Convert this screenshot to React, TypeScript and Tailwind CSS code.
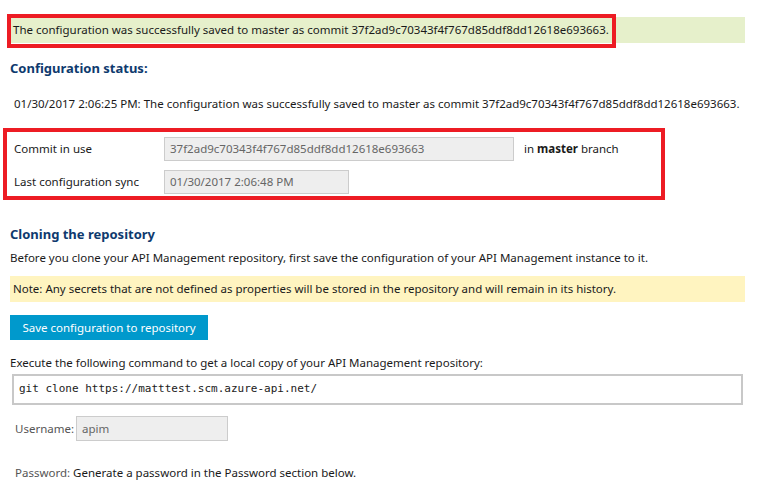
import React from 'react';

const font = { fontFamily: '"Noto Sans", "Open Sans", Arial, sans-serif' };

export default function App() {
  return (
    <div className="relative w-[772px] h-[498px] bg-white overflow-hidden text-[11.5px] text-[#1a1a1a]" style={font}>
      {/* success banner */}
      <div className="relative pt-[17px]">
        <div className="ml-[10px] w-[735px] h-[26px] bg-[#e6f0cb] flex items-center pl-[3px] leading-none">
          The configuration was successfully saved to master as commit 37f2ad9c70343f4f767d85ddf8dd12618e693663.
        </div>
        <div className="absolute left-[7px] top-[14px] w-[609px] h-[34px] border-4 border-[#ed1c24]" />
      </div>

      <h2 className="ml-[10px] mt-[17px] text-[13px] font-bold text-[#0e3a6e] leading-[16px]">Configuration status:</h2>

      <p className="ml-[14px] mt-[20px] leading-[16px]">
        01/30/2017 2:06:25 PM: The configuration was successfully saved to master as commit 37f2ad9c70343f4f767d85ddf8dd12618e693663.
      </p>

      {/* commit info */}
      <div className="relative mt-[16px] ml-[3px] w-[662px] h-[72px] border-4 border-[#ed1c24] pl-[7px] pt-[5px] flex flex-col gap-[9px]">
        <div className="flex items-center h-[24px]">
          <span className="w-[150px]">Commit in use</span>
          <div className="w-[350px] h-[24px] bg-[#eeeeee] border border-[#cccccc] flex items-center pl-[5px] text-[#666]">
            37f2ad9c70343f4f767d85ddf8dd12618e693663
          </div>
          <span className="ml-[10px]">
            in <b>master</b> branch
          </span>
        </div>
        <div className="flex items-center h-[24px]">
          <span className="w-[150px]">Last configuration sync</span>
          <div className="w-[185px] h-[24px] bg-[#eeeeee] border border-[#cccccc] flex items-center pl-[5px] text-[#666]">
            01/30/2017 2:06:48 PM
          </div>
        </div>
      </div>

      <h2 className="ml-[10px] mt-[26px] text-[13px] font-bold text-[#0e3a6e] leading-[16px]">Cloning the repository</h2>
      <p className="ml-[10px] mt-[8px] leading-[16px]">
        Before you clone your API Management repository, first save the configuration of your API Management instance to it.
      </p>

      <div className="ml-[10px] mt-[10px] w-[735px] h-[26px] bg-[#fff4c0] flex items-center pl-[3px]">
        Note: Any secrets that are not defined as properties will be stored in the repository and will remain in its history.
      </div>

      <button className="ml-[10px] mt-[13px] w-[198px] h-[25px] bg-[#0099cc] text-white text-[11.5px] flex items-center justify-center">
        Save configuration to repository
      </button>

      <p className="ml-[10px] mt-[15px] leading-[16px]">
        Execute the following command to get a local copy of your API Management repository:
      </p>

      <div
        className="ml-[12px] mt-[3px] w-[731px] h-[31px] border-2 border-[#c8c8c8] flex items-center pl-[5px] text-[11px]"
        style={{ fontFamily: '"DejaVu Sans Mono", "Liberation Mono", monospace' }}
      >
        git clone https://matttest.scm.azure-api.net/
      </div>

      <div className="ml-[15px] mt-[11px] flex items-center">
        <span className="text-[#555] mr-[2px]">Username:</span>
        <div className="w-[152px] h-[25px] bg-[#eeeeee] border border-[#cccccc] flex items-center pl-[5px] text-[#666]">apim</div>
      </div>

      <p className="ml-[15px] mt-[24px] leading-[16px]">
        <span className="text-[#555]">Password:</span> Generate a password in the Password section below.
      </p>
    </div>
  );
}
